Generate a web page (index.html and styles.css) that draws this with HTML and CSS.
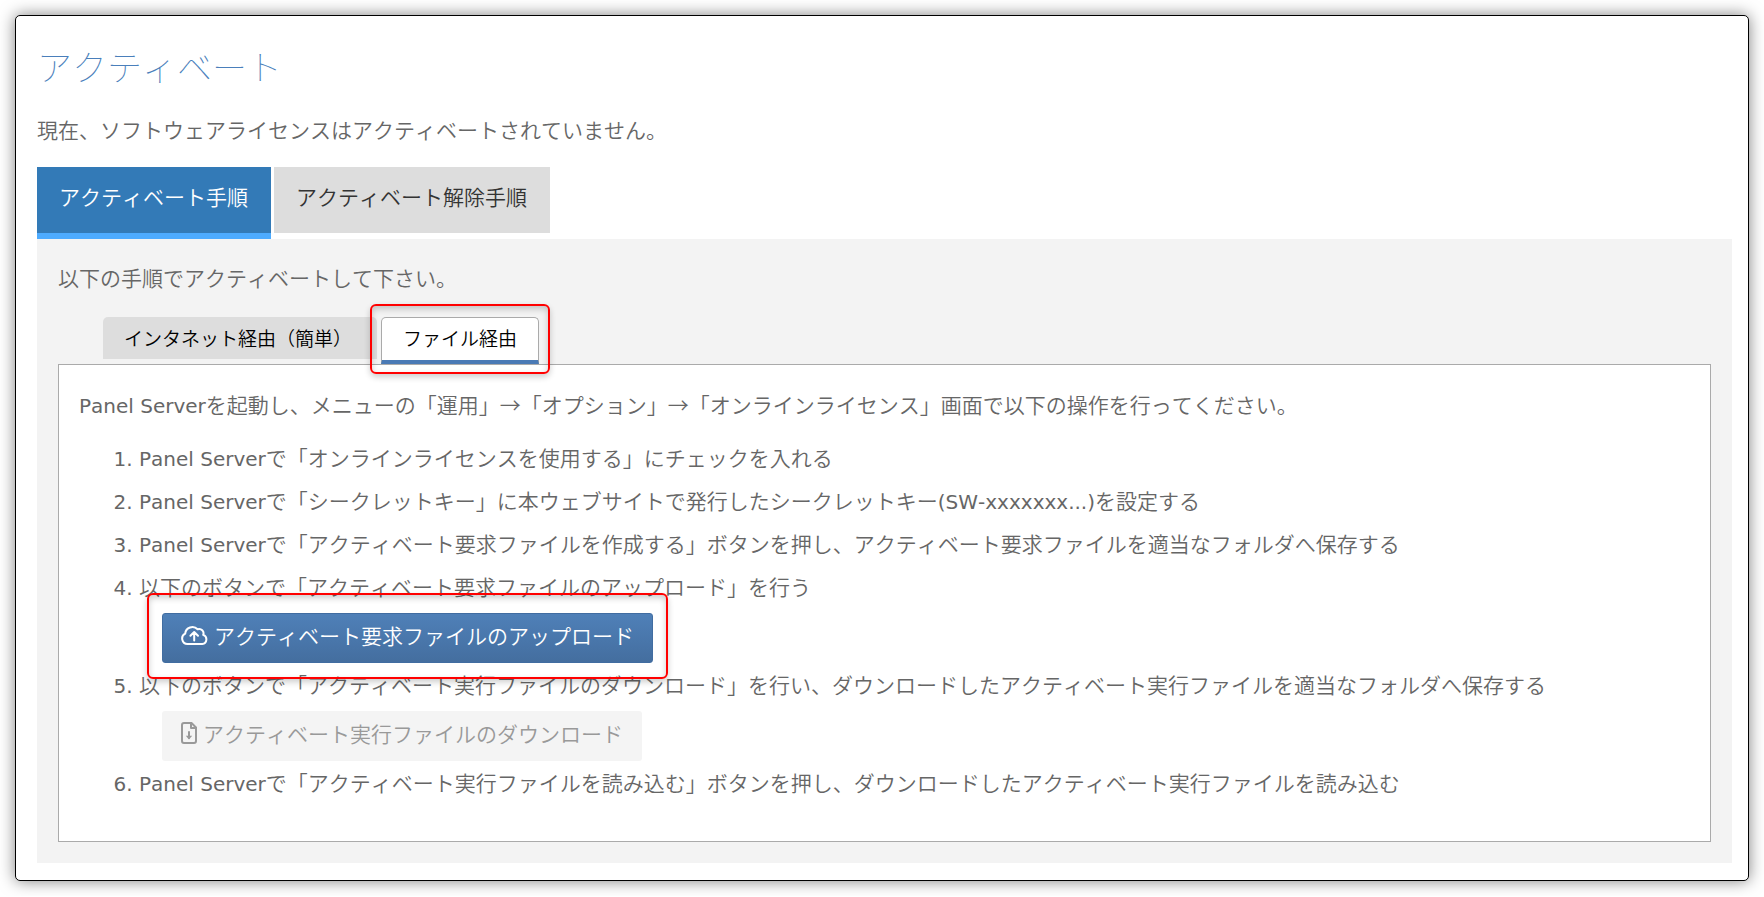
FILE: index.html
```
<!DOCTYPE html>
<html lang="ja">
<head>
  <meta charset="UTF-8" />
  <title>アクティベート</title>
  <link rel="stylesheet" href="styles.css">
</head>
<body>
  <main class="card">
    <h1>アクティベート</h1>
    <p class="status">現在、ソフトウェアライセンスはアクティベートされていません。</p>

    <div class="tabs" role="tablist">
      <button type="button" class="tab active" role="tab" aria-selected="true">アクティベート手順</button>
      <button type="button" class="tab" role="tab" aria-selected="false">アクティベート解除手順</button>
    </div>

    <section class="panel">
      <p class="lead">以下の手順でアクティベートして下さい。</p>

      <div class="subtabs" role="tablist">
        <button type="button" class="subtab" role="tab" aria-selected="false">インタネット経由（簡単）</button>
        <div class="marked">
          <button type="button" class="subtab active" role="tab" aria-selected="true">ファイル経由</button>
          <span class="mark mark-tab"></span>
        </div>
      </div>

      <div class="box">
        <p class="intro"><span class="en">Panel Server</span>を起動し、メニューの「運用」→「オプション」→「オンラインライセンス」画面で以下の操作を行ってください。</p>
        <ol class="steps">
          <li><span class="en">Panel Server</span>で「オンラインライセンスを使用する」にチェックを入れる</li>
          <li><span class="en">Panel Server</span>で「シークレットキー」に本ウェブサイトで発行したシークレットキー<span class="en">(SW-xxxxxxx...)</span>を設定する</li>
          <li><span class="en">Panel Server</span>で「アクティベート要求ファイルを作成する」ボタンを押し、アクティベート要求ファイルを適当なフォルダへ保存する</li>
          <li>以下のボタンで「アクティベート要求ファイルのアップロード」を行う
            <div class="action">
              <div class="marked">
                <button type="button" class="btn btn-primary">
                  <svg class="icon-cloud" viewBox="0 0 27 20">
                    <path d="M6.5 19A5.5 5.5 0 0 1 4.2 8.6A7.2 7.2 0 0 1 16.6 4.3A4.3 4.3 0 0 1 22.2 9.9A4.7 4.7 0 0 1 21.3 19Z" />
                    <path d="M13.2 15.5V7.3M9.4 10.8L13.2 7L17 10.8" />
                  </svg>
                  <span>アクティベート要求ファイルのアップロード</span>
                </button>
                <span class="mark mark-btn"></span>
              </div>
            </div>
          </li>
          <li>以下のボタンで「アクティベート実行ファイルのダウンロード」を行い、ダウンロードしたアクティベート実行ファイルを適当なフォルダへ保存する
            <div class="action">
              <button type="button" class="btn btn-disabled" disabled>
                <svg class="icon-file" viewBox="0 0 16 22">
                  <path d="M3 1H10.5L15 5.5V19A2 2 0 0 1 13 21H3A2 2 0 0 1 1 19V3A2 2 0 0 1 3 1Z" />
                  <path d="M10 1V6H15" />
                  <path d="M8 10V16" />
                  <path class="head" d="M4.8 13.8H11.2L8 17.4Z" />
                </svg>
                <span>アクティベート実行ファイルのダウンロード</span>
              </button>
            </div>
          </li>
          <li><span class="en">Panel Server</span>で「アクティベート実行ファイルを読み込む」ボタンを押し、ダウンロードしたアクティベート実行ファイルを読み込む</li>
        </ol>
      </div>
    </section>
  </main>
</body>
</html>
```
FILE: styles.css
```
* {
  box-sizing: border-box;
}

body {
  margin: 0;
  padding: 15px;
  background: #fff;
  color: #666;
  font-family: "Noto Sans CJK JP", sans-serif;
  font-size: 21px;
  font-weight: 350;
  font-kerning: none;
  line-height: 32px;
}

h1,
p {
  margin: 0;
}

button {
  margin: 0;
  border: none;
  font: inherit;
  font-kerning: none;
  cursor: pointer;
}

.en,
.steps li::marker {
  font-family: "DejaVu Sans", sans-serif;
  font-size: 20px;
  font-weight: 400;
}

.en {
  line-height: 1;
}

.card {
  padding: 24px 16px 17px 21px;
  background: #fff;
  border: 1px solid #000;
  border-radius: 5px;
  box-shadow: 0 0 16px rgba(0, 0, 0, 0.5);
}

h1 {
  color: #4a7fbb;
  font-size: 35px;
  font-weight: 100;
  line-height: 52px;
}

.status {
  margin-top: 21px;
}

/* Main tabs */
.tabs {
  display: flex;
  align-items: flex-start;
  gap: 3px;
  margin-top: 22px;
}

.tab {
  height: 66px;
  padding: 0 23px 9px 22px;
  background: #ddd;
  color: #333;
}

.tab.active {
  height: 72px;
  background: #337ab7;
  border-bottom: 6px solid #4dabff;
  color: #fff;
}

.panel {
  padding: 22px 21px 21px;
  background: #f3f3f3;
}

/* Inner tabs */
.subtabs {
  display: flex;
  align-items: flex-start;
  gap: 4px;
  margin-top: 24px;
  padding-left: 45px;
}

.subtab {
  display: block;
  height: 42px;
  padding: 0 25px 1px 21px;
  background: #ddd;
  border-radius: 5px 5px 0 0;
  color: #000;
  font-size: 19px;
}

.subtab.active {
  height: 47px;
  padding: 0 21px 3px;
  background: #fff;
  border: 1px solid #aaa;
  border-bottom: 4px solid #4a7ab5;
}

.box {
  padding: 23px 20px 37px;
  background: #fff;
  border: 1px solid #aaa;
}

.steps {
  margin: 16px 0 0;
  padding-left: 60px;
  line-height: 43px;
}

.action {
  display: flex;
  margin-top: 5px;
  padding-left: 23px;
}

/* Buttons */
.btn {
  display: flex;
  align-items: center;
  gap: 6px;
  height: 50px;
  padding: 0 19px 6px;
  border-radius: 3px;
  line-height: 32px;
}

.btn-primary {
  padding: 0 18px 6px;
  background: linear-gradient(#4f80b8, #446e9f);
  border: 1px solid #416da1;
  color: #fff;
}

.btn-disabled {
  background: #f4f4f4;
  color: #999;
  cursor: not-allowed;
}

.btn svg {
  fill: none;
  stroke: currentColor;
  stroke-width: 2;
  stroke-linecap: round;
  stroke-linejoin: round;
}

.icon-cloud {
  width: 27px;
  height: 20px;
}

.icon-file {
  width: 16px;
  height: 22px;
}

.btn .head {
  fill: currentColor;
  stroke: none;
}

/* Red callout frames */
.marked {
  position: relative;
}

.mark {
  position: absolute;
  border: 2px solid #f00;
  border-radius: 6px;
  box-shadow: 0 3px 6px rgba(0, 0, 0, 0.2), inset 0 3px 6px rgba(0, 0, 0, 0.2);
  pointer-events: none;
}

.mark-tab {
  inset: -13px -11px -10px;
}

.mark-btn {
  inset: -20px -15px -16px;
}
```
